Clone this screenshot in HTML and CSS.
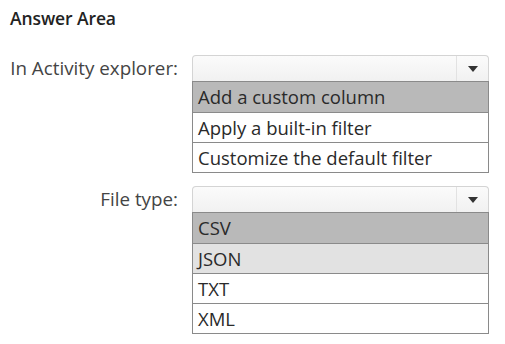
FILE: index.html
```html
<!DOCTYPE html>
<html>
  <head>
    <title>Answer Area</title>
    <meta charset="UTF-8" />
    <link rel="stylesheet" href="styles.css">
  </head>
  <body>
    <h2>Answer Area</h2>
    <div class="answer">
      <div class="label">In Activity explorer:</div>
      <div class="dropdown">
        <div class="box"><span class="arrow"></span></div>
        <ul class="list">
          <li class="picked">Add a custom column</li>
          <li>Apply a built-in filter</li>
          <li>Customize the default filter</li>
        </ul>
      </div>
      <div class="label">File type:</div>
      <div class="dropdown">
        <div class="box"><span class="arrow"></span></div>
        <ul class="list">
          <li class="picked">CSV</li>
          <li class="hover">JSON</li>
          <li>TXT</li>
          <li>XML</li>
        </ul>
      </div>
    </div>
  </body>
</html>
```

FILE: styles.css
```css
body {
  margin: 0;
  padding: 8px 10px;
  font-family: "Open Sans", "Noto Sans", sans-serif;
  color: #333;
  background: #fff;
}
h2 {
  margin: 0;
  font-size: 17.5px;
  font-weight: 600;
  line-height: 20px;
  color: #222;
  letter-spacing: -0.1px;
}
.answer {
  display: grid;
  grid-template-columns: 168px 297px;
  column-gap: 14px;
  row-gap: 13px;
  margin-top: 27px;
}
.label {
  text-align: right;
  font-size: 18.8px;
  line-height: 27px;
  color: #444;
  white-space: nowrap;
}
.box {
  height: 25px;
  border: 1px solid #d4d4d4;
  border-bottom: 0;
  border-radius: 4px 4px 0 0;
  background: linear-gradient(#fbfbfb, #f1f1f1);
  display: flex;
  justify-content: flex-end;
}
.arrow {
  width: 31px;
  border-left: 1px solid #e2e2e2;
  display: flex;
  align-items: center;
  justify-content: center;
}
.arrow::before {
  content: "";
  border-left: 5px solid transparent;
  border-right: 5px solid transparent;
  border-top: 6px solid #333;
}
.list {
  list-style: none;
  margin: 0;
  padding: 0;
  border: 1px solid #8a8a8a;
}
.list li {
  height: 29px;
  line-height: 29px;
  padding-left: 5px;
  font-size: 18.5px;
  color: #2a2a2a;
  border-top: 1px solid #8a8a8a;
  white-space: nowrap;
}
.list li:first-child {
  border-top: 0;
  height: 30px;
}
.list li.picked {
  background: #b9b9b9;
}
.list li.hover {
  background: #e2e2e2;
}
```
